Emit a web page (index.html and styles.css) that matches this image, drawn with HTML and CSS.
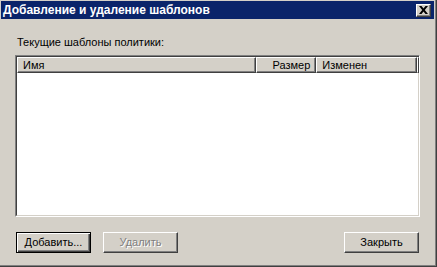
FILE: index.html
```html
<!DOCTYPE html>
<html>
<head>
<meta charset="UTF-8">
<title>Добавление и удаление шаблонов</title>
<link rel="stylesheet" href="styles.css">
</head>
<body>
<div class="window">
	<div class="titlebar">
		<span class="title">Добавление и удаление шаблонов</span>
		<span class="close_btn">
			<svg width="9" height="8" viewBox="0 0 9 8"><path d="M0 0h2.5l2 2.6 2-2.6h2.5l-3.2 4 3.2 4h-2.5l-2-2.6-2 2.6h-2.5l3.2-4z" fill="#000"/></svg>
		</span>
	</div>
	<div class="content">
		<div class="label">Текущие шаблоны политики:</div>
		<div class="list">
			<div class="list_head">
				<div class="col col_name">Имя</div>
				<div class="col col_size">Размер</div>
				<div class="col col_date">Изменен</div>
				<div class="col col_rest"></div>
			</div>
			<div class="list_body"></div>
		</div>
		<div class="buttons">
			<div class="btn btn_default">Добавить...</div>
			<div class="btn btn_disabled">Удалить</div>
			<div class="spacer"></div>
			<div class="btn">Закрыть</div>
		</div>
	</div>
</div>
</body>
</html>
```

FILE: styles.css
```css
body {
	margin: 0;
	background-color: #D4D0C8;
	font-family: "Liberation Sans", Arial, sans-serif;
	font-size: 11px;
	color: #000;
}
.window {
	width: 437px;
	height: 267px;
	box-sizing: border-box;
	padding: 1px 2px 2px 1px;
	border-right: 1px solid #404040;
	border-bottom: 1px solid #404040;
	box-shadow: inset -1px -1px 0 #808080;
	display: flex;
	flex-direction: column;
}
.titlebar {
	height: 18px;
	background-color: #0A246A;
	display: flex;
	align-items: center;
	padding: 0 2px 0 2px;
}
.title {
	flex: 1;
	color: #fff;
	font-weight: bold;
	font-size: 12px;
	white-space: nowrap;
}
.close_btn {
	width: 15px;
	height: 13px;
	box-sizing: border-box;
	background-color: #D4D0C8;
	border-top: 1px solid #fff;
	border-left: 1px solid #fff;
	border-right: 1px solid #404040;
	border-bottom: 1px solid #404040;
	box-shadow: inset -1px -1px 0 #808080;
	display: flex;
	align-items: center;
	justify-content: center;
	margin-right: 1px;
}
.content {
	flex: 1;
	display: flex;
	flex-direction: column;
	padding: 16px 15px 0 14px;
}
.label {
	height: 14px;
	line-height: 14px;
	margin-left: 2px;
}
.list {
	margin-top: 6px;
	height: 162px;
	width: 405px;
	box-sizing: border-box;
	border-top: 1px solid #808080;
	border-left: 1px solid #808080;
	border-right: 1px solid #fff;
	border-bottom: 1px solid #fff;
	display: flex;
	flex-direction: column;
}
.list_head {
	display: flex;
	height: 16px;
	border-top: 1px solid #404040;
	border-left: 1px solid #404040;
	background-color: #fff;
}
.col {
	box-sizing: border-box;
	height: 16px;
	line-height: 14px;
	background-color: #D4D0C8;
	border-top: 1px solid #fff;
	border-left: 1px solid #fff;
	border-right: 1px solid #404040;
	border-bottom: 1px solid #404040;
	box-shadow: inset -1px -1px 0 #808080;
	padding: 0 5px;
	white-space: nowrap;
}
.col_name {
	width: 240px;
}
.col_size {
	width: 60px;
	text-align: right;
}
.col_date {
	width: 101px;
}
.col_rest {
	flex: 1;
	padding: 0;
}
.list_body {
	flex: 1;
	background-color: #fff;
	border-left: 1px solid #404040;
	border-right: 1px solid #D4D0C8;
	border-bottom: 1px solid #D4D0C8;
}
.buttons {
	display: flex;
	margin-top: 15px;
	padding-left: 1px;
}
.btn {
	width: 75px;
	height: 21px;
	box-sizing: border-box;
	line-height: 18px;
	text-align: center;
	background-color: #D4D0C8;
	border-top: 1px solid #fff;
	border-left: 1px solid #fff;
	border-right: 1px solid #404040;
	border-bottom: 1px solid #404040;
	box-shadow: inset -1px -1px 0 #808080;
}
.btn_default {
	border: 1px solid #000;
	box-shadow: inset 1px 1px 0 #fff, inset -1px -1px 0 #404040, inset -2px -2px 0 #808080;
}
.btn_disabled {
	margin-left: 12px;
	color: #808080;
	text-shadow: 1px 1px 0 #fff;
}
.spacer {
	flex: 1;
}
```
